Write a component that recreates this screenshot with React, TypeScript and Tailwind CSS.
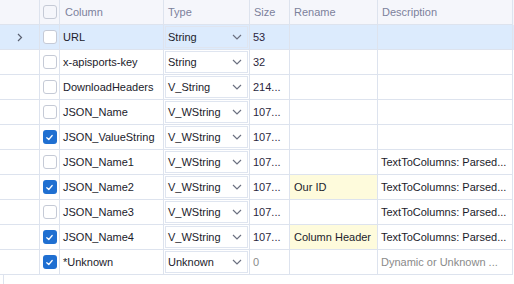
import React from 'react';

interface Row {
  name: string;
  type: string;
  size: string;
  rename?: string;
  desc?: string;
  checked: boolean;
  selected?: boolean;
  dim?: boolean;
}

const rows: Row[] = [
  { name: 'URL', type: 'String', size: '53', checked: false, selected: true },
  { name: 'x-apisports-key', type: 'String', size: '32', checked: false },
  { name: 'DownloadHeaders', type: 'V_String', size: '214...', checked: false },
  { name: 'JSON_Name', type: 'V_WString', size: '107...', checked: false },
  { name: 'JSON_ValueString', type: 'V_WString', size: '107...', checked: true },
  { name: 'JSON_Name1', type: 'V_WString', size: '107...', desc: 'TextToColumns: Parsed...', checked: false },
  { name: 'JSON_Name2', type: 'V_WString', size: '107...', rename: 'Our ID', desc: 'TextToColumns: Parsed...', checked: true },
  { name: 'JSON_Name3', type: 'V_WString', size: '107...', desc: 'TextToColumns: Parsed...', checked: false },
  { name: 'JSON_Name4', type: 'V_WString', size: '107...', rename: 'Column Header', desc: 'TextToColumns: Parsed...', checked: true },
  { name: '*Unknown', type: 'Unknown', size: '0', desc: 'Dynamic or Unknown ...', checked: true, dim: true },
];

const cols = 'grid grid-cols-[40px_20px_104px_86px_40px_88px_135px]';
const cell = 'h-[25px] border-r border-b border-[#dde3ee] flex items-center overflow-hidden whitespace-nowrap';

const Checkbox = ({ checked }: { checked: boolean }) =>
  checked ? (
    <div className="w-[14px] h-[14px] rounded-[3px] bg-[#1f6fd1] flex items-center justify-center">
      <svg width="9" height="9" viewBox="0 0 10 10" fill="none">
        <path d="M2 5.2 L4.2 7.2 L8 2.8" stroke="white" strokeWidth="1.4" strokeLinecap="round" strokeLinejoin="round" />
      </svg>
    </div>
  ) : (
    <div className="w-[14px] h-[14px] rounded-[3px] bg-white border border-[#c5cad6]" />
  );

const Chevron = () => (
  <svg width="10" height="6" viewBox="0 0 10 6" fill="none">
    <path d="M1 1 L5 5 L9 1" stroke="#6b7080" strokeWidth="1.2" />
  </svg>
);

export default function App() {
  return (
    <div className="w-[514px] h-[284px] bg-white text-[11px] text-[#1b1b2b] overflow-hidden" style={{ fontFamily: '"Liberation Sans", Arial, sans-serif' }}>
      <div className={`${cols} bg-[#f5f6fb] text-[#7c819b]`}>
        <div className={cell} />
        <div className={`${cell} justify-center`}>
          <div className="w-[14px] h-[14px] rounded-[3px] border border-[#c5cad6] bg-[#f5f6fb]" />
        </div>
        <div className={`${cell} pl-[5px]`}>Column</div>
        <div className={`${cell} pl-[4px]`}>Type</div>
        <div className={`${cell} pl-[4px]`}>Size</div>
        <div className={`${cell} pl-[4px]`}>Rename</div>
        <div className={`${cell} pl-[4px]`}>Description</div>
      </div>
      {rows.map((r) => (
        <div key={r.name} className={`${cols} ${r.selected ? 'bg-[#dcebfd]' : 'bg-white'}`}>
          <div className={`${cell} justify-center text-[#6b7080]`}>
            {r.selected && (
              <svg width="6" height="9" viewBox="0 0 6 9" fill="none">
                <path d="M1 1 L4.5 4.5 L1 8" stroke="#5a6070" strokeWidth="1.2" />
              </svg>
            )}
          </div>
          <div className={`${cell} justify-center`}>
            <Checkbox checked={r.checked} />
          </div>
          <div className={`${cell} pl-[3px]`}>{r.name}</div>
          <div className={`${cell} p-[1px]`}>
            <div className={`w-full h-full border border-[#dfe5f0] flex items-center justify-between pl-[2px] pr-[5px] ${r.selected ? 'bg-[#dcebfd]' : 'bg-white'}`}>
              <span>{r.type}</span>
              <Chevron />
            </div>
          </div>
          <div className={`${cell} pl-[3px] ${r.dim ? 'text-[#8a8a8a]' : 'text-[#2a1f3d]'}`}>{r.size}</div>
          <div className={`${cell} pl-[4px] ${r.rename ? 'bg-[#fefbdc]' : ''}`}>{r.rename}</div>
          <div className={`${cell} pl-[3px] ${r.dim ? 'text-[#8a8a8a]' : ''}`}>{r.desc}</div>
        </div>
      ))}
      <div className="ml-[3px] h-full border-l border-[#dde3ee]" />
    </div>
  );
}
